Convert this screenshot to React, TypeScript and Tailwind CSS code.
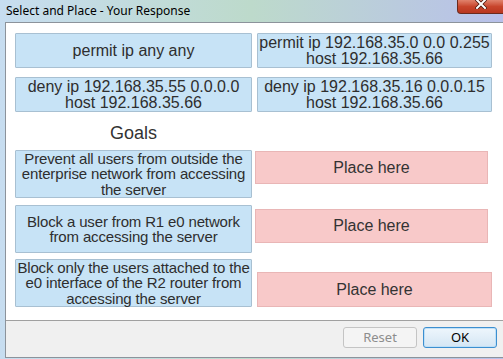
import React from 'react';

const options = [
  { left: ['permit ip any any'], right: ['permit ip 192.168.35.0 0.0 0.255', 'host 192.168.35.66'] },
  { left: ['deny ip 192.168.35.55 0.0.0.0', 'host 192.168.35.66'], right: ['deny ip 192.168.35.16 0.0.0.15', 'host 192.168.35.66'] },
];

const goals = [
  {
    lines: ['Prevent all users from outside the', 'enterprise network from accessing', 'the server'],
    rowClass: 'mt-0',
    slotClass: 'mt-[1px] ml-[3px] w-[233px] h-[33px]',
  },
  {
    lines: ['Block a user from R1 e0 network', 'from accessing the server'],
    rowClass: 'mt-[7px]',
    slotClass: 'mt-[4px] ml-[3px] w-[233px] h-[34px]',
  },
  {
    lines: ['Block only the users attached to the', 'e0 interface of the R2 router from', 'accessing the server'],
    rowClass: 'mt-[6px]',
    slotClass: 'mt-[13px] ml-[5px] w-[235px] h-[35px]',
  },
];

function Card({ lines, className = '' }: { lines: string[]; className?: string }) {
  return (
    <div
      className={`flex flex-col items-center justify-center bg-[#c7e3f6] border border-[#a8c0d2] rounded-[1px] text-[#2e2e2e] ${className}`}
    >
      {lines.map((l) => (
        <div key={l} className="whitespace-nowrap">
          {l}
        </div>
      ))}
    </div>
  );
}

export default function App() {
  return (
    <div className="relative w-[503px] h-[359px] overflow-hidden flex flex-col bg-gradient-to-r from-[#c7ddf0] via-[#bddacb] to-[#b8c0ea] font-['Liberation_Sans',Arial,sans-serif]">
      {/* Title bar */}
      <div className="h-[22px] flex items-center pl-[6px] text-[12px] text-black font-['Noto_Sans','Open_Sans',sans-serif]">
        Select and Place - Your Response
      </div>
      <div className="absolute top-0 right-[-4px] w-[50px] h-[14px] rounded-bl-[4px] border border-t-0 border-[#6b2a1e] bg-gradient-to-b from-[#e0826c] via-[#c8452c] to-[#b8361f] flex items-start justify-center pr-[3px]">
        <svg width="12" height="9" viewBox="0 0 12 9">
          <path d="M2 0 L10 8 M10 0 L2 8" stroke="#4a160c" strokeWidth="3.6" strokeLinecap="square" />
          <path d="M2 0 L10 8 M10 0 L2 8" stroke="#ffffff" strokeWidth="2" strokeLinecap="square" />
        </svg>
      </div>

      {/* Client area */}
      <div className="flex-1 ml-[5px] mb-[1px] border border-r-0 border-[#8c939b] bg-white flex flex-col">
        <div className="flex-1 pl-[9px] pt-[10px]">
          {options.map((row, i) => (
            <div key={i} className={`flex gap-[5px] ${i === 0 ? '' : 'mt-[9px]'}`}>
              <Card lines={row.left} className="w-[237px] h-[35px] text-[16px] leading-[16px]" />
              <Card lines={row.right} className="w-[235px] h-[35px] text-[16px] leading-[16px]" />
            </div>
          ))}

          <div className="w-[237px] h-[38px] pt-[4px] flex items-center justify-center text-[18px] text-[#333]">
            Goals
          </div>

          {goals.map((g) => (
            <div key={g.lines[0]} className={`flex items-start ${g.rowClass}`}>
              <Card lines={g.lines} className="w-[237px] h-[48px] text-[15px] leading-[15.5px] tracking-[-0.15px]" />
              <div
                className={`flex items-center justify-center bg-[#f8c9c9] border border-[#e9b6b6] text-[16px] text-[#333] ${g.slotClass}`}
              >
                Place here
              </div>
            </div>
          ))}
        </div>

        {/* Footer */}
        <div className="h-[37px] border-t border-[#a0a0a0] bg-[#f0f0f0] flex justify-end gap-[6px] pt-[6px] pr-[6px] font-['Noto_Sans','Open_Sans',sans-serif] text-[13px]">
          <button className="w-[74px] h-[21px] leading-none rounded-[3px] border border-[#c4c4c4] bg-[#f4f4f4] text-[#8d8d8d]">
            Reset
          </button>
          <button className="w-[74px] h-[21px] leading-none rounded-[3px] border border-[#3c8fd0] bg-gradient-to-b from-[#eef6fc] to-[#d4e6f4] text-black shadow-[inset_0_0_0_1px_#bfe0f7]">
            OK
          </button>
        </div>
      </div>
    </div>
  );
}
